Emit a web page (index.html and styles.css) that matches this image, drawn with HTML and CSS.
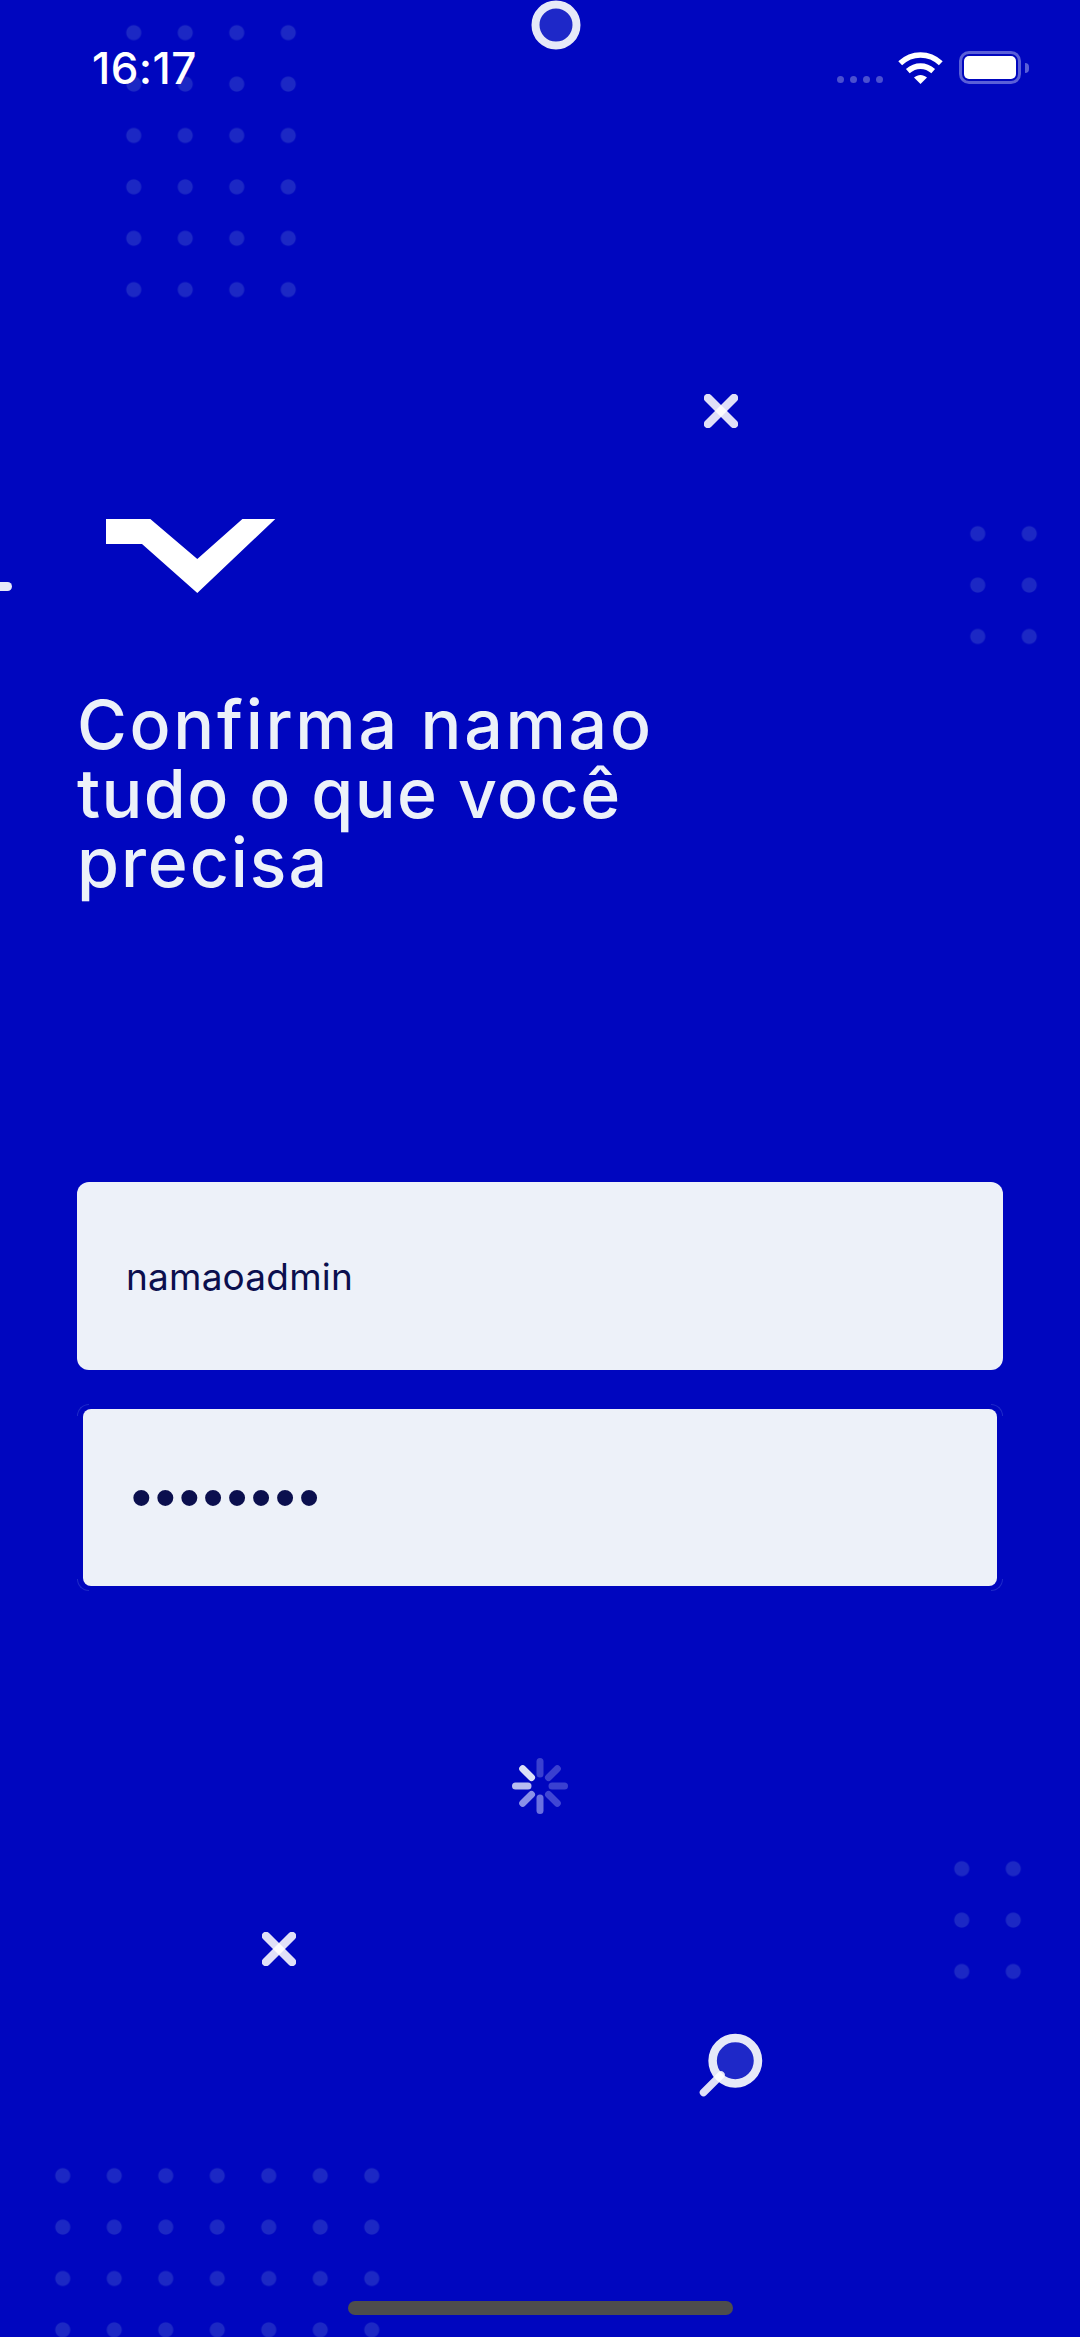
FILE: index.html
```html
<!DOCTYPE html>
<html>
<head>
    <title>Namao</title>
    <link rel="stylesheet" href="styles.css">
</head>
<body>
    <div class="screen">
        <!-- background decoration -->
        <div class="dots dots-top"></div>
        <div class="dots dots-right"></div>
        <div class="dots dots-lower"></div>
        <div class="dots dots-bottom"></div>

        <svg class="deco deco-ring" width="60" height="60" viewBox="0 0 60 60">
            <circle cx="30" cy="30" r="20.5" fill="#1e28c8" stroke="#e6e9f8" stroke-width="8"/>
        </svg>
        <svg class="deco deco-x-top" width="34" height="34" viewBox="0 0 34 34" stroke="#fff" stroke-opacity="0.88" stroke-width="8.5" stroke-linecap="round">
            <path d="M4 4L30 30"/>
            <path d="M30 4L4 30"/>
        </svg>
        <svg class="deco deco-x-low" width="34" height="34" viewBox="0 0 34 34" stroke="#fff" stroke-opacity="0.88" stroke-width="8.5" stroke-linecap="round">
            <path d="M4 4L30 30"/>
            <path d="M30 4L4 30"/>
        </svg>
        <div class="deco deco-dash"></div>
        <svg class="deco deco-spinner" width="60" height="60" viewBox="0 0 60 60" stroke-width="7" stroke-linecap="round">
            <path d="M30 5.5V18" stroke="#3a40d0"/>
            <path d="M47.3 12.7L38.5 21.5" stroke="#3a40d0"/>
            <path d="M54.5 30H42" stroke="#3a40d0"/>
            <path d="M47.3 47.3L38.5 38.5" stroke="#4046d4"/>
            <path d="M30 54.5V42" stroke="#6a70e0"/>
            <path d="M12.7 47.3L21.5 38.5" stroke="#8a90e8"/>
            <path d="M5.5 30H18" stroke="#b8bcf0"/>
            <path d="M12.7 12.7L21.5 21.5" stroke="#dcdff8"/>
        </svg>
        <svg class="deco deco-search" width="70" height="70" viewBox="0 0 70 70">
            <circle cx="40.3" cy="28.7" r="22.7" fill="#1e28c8" stroke="#e6e9f8" stroke-width="8.5"/>
            <path d="M26 43L8.5 60.5" stroke="#fff" stroke-opacity="0.88" stroke-width="7.5" stroke-linecap="round"/>
        </svg>

        <header class="statusbar">
            <span class="time">16:17</span>
            <div class="status-icons">
                <div class="signal"><i></i><i></i><i></i><i></i></div>
                <svg class="wifi" width="45" height="33" viewBox="0 0 45 33" fill="none" stroke="#fff" stroke-width="5.6">
                    <path d="M2.2 12.2C14 1.2 31 1.2 42.8 12.2"/>
                    <path d="M9.8 20.2C17.5 13.4 27.5 13.4 35.2 20.2"/>
                    <path d="M16 26.5L22.5 33L29 26.5C25 23 20 23 16 26.5Z" fill="#fff" stroke="none"/>
                </svg>
                <div class="battery"><div class="battery-level"></div></div>
                <div class="battery-cap"></div>
            </div>
        </header>

        <main class="content">
            <svg class="logo" width="170" height="75" viewBox="0 0 170 75">
                <path d="M0 0H44.3L91.3 40L136.4 0H169.3L91.3 74L36 25H0Z" fill="#fff"/>
            </svg>

            <h1 class="title">
                <span class="line-1">Confirma namao</span>
                <span class="line-2">tudo o que você</span>
                <span class="line-3">precisa</span>
            </h1>

            <form class="login-form">
                <div class="field">namaoadmin</div>
                <div class="field-wrap">
                    <div class="field field-focus">
                        <span class="password">••••••••</span>
                    </div>
                    <span class="corner tl"></span>
                    <span class="corner tr"></span>
                    <span class="corner bl"></span>
                    <span class="corner br"></span>
                </div>
            </form>
        </main>

        <div class="home-bar"></div>
    </div>
</body>
</html>
```

FILE: styles.css
```css
* {
    box-sizing: border-box;
}

html, body {
    margin: 0;
    padding: 0;
}

.screen {
    position: relative;
    width: 1080px;
    height: 2337px;
    overflow: hidden;
    background-color: #0006bf;
    font-family: Inter, "Liberation Sans", sans-serif;
}

/* decoration */
.dots {
    position: absolute;
    background-image: radial-gradient(circle, #1c28c4 7px, transparent 8px);
    background-size: 51.5px 51.4px;
}

.dots-top {
    left: 108px;
    top: 6.6px;
    width: 206px;
    height: 308.4px;
}

.dots-right {
    left: 951.5px;
    top: 508.3px;
    width: 103px;
    height: 154.2px;
}

.dots-lower {
    left: 936px;
    top: 1843px;
    width: 103px;
    height: 154.2px;
}

.dots-bottom {
    left: 36.8px;
    top: 2150px;
    width: 360.5px;
    height: 205.6px;
}

.deco {
    position: absolute;
}

.deco-ring {
    left: 526px;
    top: -5.5px;
}

.deco-x-top {
    left: 704px;
    top: 394px;
}

.deco-x-low {
    left: 262px;
    top: 1932px;
}

.deco-dash {
    left: -10px;
    top: 582px;
    width: 22px;
    height: 9px;
    border-radius: 5px;
    background-color: #e6e9f8;
}

.deco-spinner {
    left: 510px;
    top: 1756px;
}

.deco-search {
    left: 695px;
    top: 2032px;
}

/* status bar */
.statusbar {
    position: relative;
    display: flex;
    justify-content: space-between;
    align-items: flex-start;
    height: 519px;
    padding: 43px 51px 0 92px;
}

.time {
    color: #fff;
    font-size: 44px;
    font-weight: 500;
    line-height: 50px;
    letter-spacing: 0.4px;
}

.status-icons {
    display: flex;
    align-items: center;
    margin-top: 8px;
}

.signal {
    display: flex;
    gap: 6px;
    margin-top: 24px;
    margin-right: 15px;
}

.signal i {
    display: block;
    width: 7px;
    height: 7px;
    border-radius: 50%;
    background-color: #4a50d0;
}

.wifi {
    margin-right: 16px;
}

.battery {
    width: 62px;
    height: 33px;
    padding: 2px;
    border: 3px solid #5a5fd8;
    border-radius: 10px;
}

.battery-level {
    width: 100%;
    height: 100%;
    border-radius: 5px;
    background-color: #fff;
}

.battery-cap {
    width: 4px;
    height: 10px;
    margin-left: 4px;
    border-radius: 0 4px 4px 0;
    background-color: #5a5fd8;
}

/* main content */
.content {
    position: relative;
    display: flex;
    flex-direction: column;
    align-items: flex-start;
    padding: 0 77px;
}

.logo {
    margin-left: 29px;
}

.title {
    margin: 96px 0 0 0;
    color: #ecf1f9;
    font-size: 68px;
    font-weight: 500;
    line-height: 69px;
}

.title span {
    display: block;
}

.line-1 {
    letter-spacing: 2.7px;
}

.line-2 {
    letter-spacing: 1.4px;
}

.line-3 {
    letter-spacing: 1.9px;
}

.login-form {
    display: flex;
    flex-direction: column;
    gap: 34px;
    width: 926px;
    margin-top: 285px;
}

.field {
    display: flex;
    align-items: center;
    height: 188px;
    padding: 0 49px;
    border-radius: 12px;
    background-color: #edf1f9;
    color: #0b0f4e;
    font-size: 37px;
    letter-spacing: 0.2px;
}

.field-wrap {
    position: relative;
    padding: 5px 6px;
}

.field-focus {
    height: 177px;
    padding: 0 48px;
    border-radius: 8px;
}

.password {
    font-family: "Liberation Sans", sans-serif;
    font-size: 59px;
    letter-spacing: 3.3px;
}

.corner {
    position: absolute;
    width: 12px;
    height: 12px;
    border: 0 solid #1e2ac8;
}

.tl {
    left: 0;
    top: 0;
    border-width: 1px 0 0 1px;
    border-top-left-radius: 12px;
}

.tr {
    right: 0;
    top: 0;
    border-width: 1px 1px 0 0;
    border-top-right-radius: 12px;
}

.bl {
    left: 0;
    bottom: 0;
    border-width: 0 0 1px 1px;
    border-bottom-left-radius: 12px;
}

.br {
    right: 0;
    bottom: 0;
    border-width: 0 1px 1px 0;
    border-bottom-right-radius: 12px;
}

.home-bar {
    position: absolute;
    left: 348px;
    top: 2301px;
    width: 385px;
    height: 14px;
    border-radius: 7px;
    background-color: #4d4d4d;
}
```
